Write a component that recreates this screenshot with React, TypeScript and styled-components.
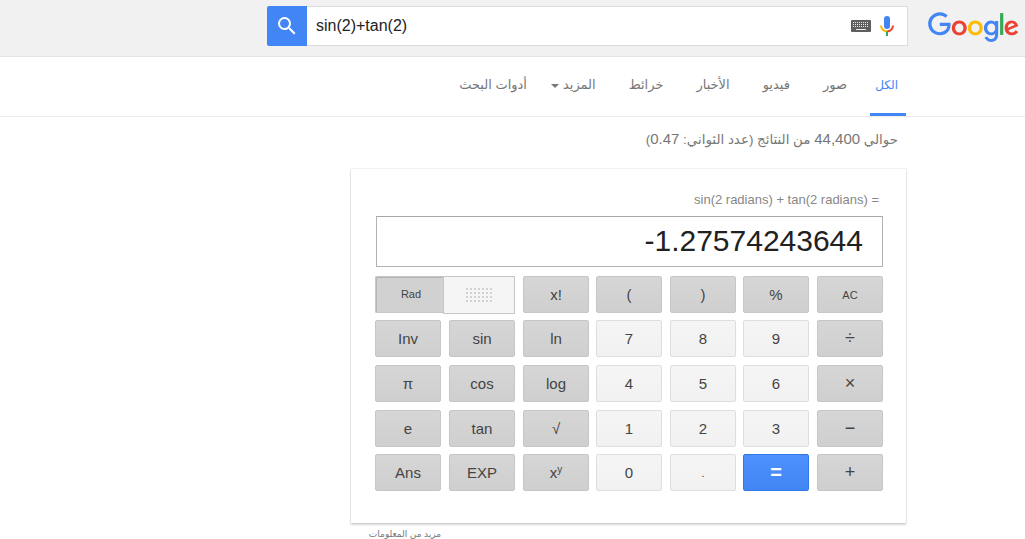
import styled, { createGlobalStyle } from 'styled-components'

const GlobalStyle = createGlobalStyle`
  html, body {
    margin: 0;
    height: 100%;
    overflow: hidden;
    background: #fff;
  }
  body {
    font-family: "Liberation Sans", "DejaVu Sans", sans-serif;
  }
`

type Tone = 'dark' | 'light' | 'blue'
type Size = 'small' | 'op' | 'equals'

const tabs = ['الكل', 'صور', 'فيديو', 'الأخبار', 'خرائط', 'المزيد', 'أدوات البحث']

const keys: { label: React.ReactNode; tone: Tone; size?: Size }[] = [
  { label: 'x!', tone: 'dark' },
  { label: '(', tone: 'dark' },
  { label: ')', tone: 'dark' },
  { label: '%', tone: 'dark' },
  { label: 'AC', tone: 'dark', size: 'small' },
  { label: 'Inv', tone: 'dark' },
  { label: 'sin', tone: 'dark' },
  { label: 'ln', tone: 'dark' },
  { label: '7', tone: 'light' },
  { label: '8', tone: 'light' },
  { label: '9', tone: 'light' },
  { label: '÷', tone: 'dark', size: 'op' },
  { label: 'π', tone: 'dark' },
  { label: 'cos', tone: 'dark' },
  { label: 'log', tone: 'dark' },
  { label: '4', tone: 'light' },
  { label: '5', tone: 'light' },
  { label: '6', tone: 'light' },
  { label: '×', tone: 'dark', size: 'op' },
  { label: 'e', tone: 'dark' },
  { label: 'tan', tone: 'dark' },
  { label: '√', tone: 'dark' },
  { label: '1', tone: 'light' },
  { label: '2', tone: 'light' },
  { label: '3', tone: 'light' },
  { label: '−', tone: 'dark', size: 'op' },
  { label: 'Ans', tone: 'dark' },
  { label: 'EXP', tone: 'dark' },
  { label: <span>x<sup>y</sup></span>, tone: 'dark' },
  { label: '0', tone: 'light' },
  { label: '.', tone: 'light', size: 'small' },
  { label: '=', tone: 'blue', size: 'equals' },
  { label: '+', tone: 'dark', size: 'op' },
]

const SearchIcon = () => (
  <svg width="24" height="24" viewBox="0 0 24 24" fill="#fff">
    <path d="M15.5 14h-.79l-.28-.27A6.471 6.471 0 0 0 16 9.5 6.5 6.5 0 1 0 9.5 16c1.61 0 3.09-.59 4.23-1.57l.27.28v.79l5 4.99L20.49 19l-4.99-5zm-6 0C7.01 14 5 11.99 5 9.5S7.01 5 9.5 5 14 7.01 14 9.5 11.99 14 9.5 14z" />
  </svg>
)

const KeyboardIcon = () => (
  <svg width="20" height="12" viewBox="0 0 20 12">
    <rect width="20" height="12" rx="1" fill="#5f5f5f" />
    <path d="M2 2.5h16M2 4.5h16M2 6.5h16" stroke="#e8e8e8" strokeWidth="1" strokeDasharray="1 1" />
    <path d="M5 9.5h10" stroke="#e8e8e8" strokeWidth="1" />
  </svg>
)

const MicIcon = () => (
  <svg width="14" height="20" viewBox="0 0 14 20">
    <path d="M7 0a3 3 0 0 1 3 3v7a3 3 0 0 1-6 0V3a3 3 0 0 1 3-3z" fill="#4285f4" />
    <path d="M1 9.5a6 6 0 0 0 6 6" fill="none" stroke="#fbbc05" strokeWidth="2" />
    <path d="M13 9.5a6 6 0 0 1-6 6" fill="none" stroke="#ea4335" strokeWidth="2" />
    <path d="M7 15.5V20" stroke="#34a853" strokeWidth="2" />
  </svg>
)

const GoogleLogo = () => (
  <svg width="91" height="31" viewBox="0 0 272 92">
    <path fill="#EA4335" d="M115.75 47.18c0 12.77-9.99 22.18-22.25 22.18s-22.25-9.41-22.25-22.18C71.25 34.32 81.24 25 93.5 25s22.25 9.32 22.25 22.18zm-9.74 0c0-7.98-5.79-13.44-12.51-13.44S80.99 39.2 80.99 47.18c0 7.9 5.79 13.44 12.51 13.44s12.51-5.55 12.51-13.44z" />
    <path fill="#FBBC05" d="M163.75 47.18c0 12.77-9.99 22.18-22.25 22.18s-22.25-9.41-22.25-22.18c0-12.85 9.99-22.18 22.25-22.18s22.25 9.32 22.25 22.18zm-9.74 0c0-7.98-5.79-13.44-12.51-13.44s-12.51 5.46-12.51 13.44c0 7.9 5.79 13.44 12.51 13.44s12.51-5.55 12.51-13.44z" />
    <path fill="#4285F4" d="M209.75 26.34v39.82c0 16.38-9.66 23.07-21.08 23.07-10.75 0-17.22-7.19-19.66-13.07l8.48-3.53c1.51 3.61 5.21 7.87 11.17 7.87 7.31 0 11.84-4.51 11.84-13v-3.19h-.34c-2.18 2.69-6.38 5.04-11.68 5.04-11.09 0-21.25-9.66-21.25-22.09 0-12.52 10.16-22.26 21.25-22.26 5.29 0 9.49 2.35 11.68 4.96h.34v-3.61h9.25zm-8.56 20.92c0-7.81-5.21-13.52-11.84-13.52-6.72 0-12.35 5.71-12.35 13.52 0 7.73 5.63 13.36 12.35 13.36 6.63 0 11.84-5.63 11.84-13.36z" />
    <path fill="#34A853" d="M225 3v65h-9.5V3h9.5z" />
    <path fill="#EA4335" d="M262.02 54.48l7.56 5.04c-2.44 3.61-8.32 9.83-18.48 9.83-12.6 0-22.01-9.74-22.01-22.18 0-13.19 9.49-22.18 20.92-22.18 11.51 0 17.14 9.16 18.98 14.11l1.01 2.52-29.65 12.28c2.27 4.45 5.8 6.72 10.75 6.72 4.96 0 8.4-2.44 10.92-6.14zm-23.27-7.98l19.82-8.23c-1.09-2.77-4.37-4.7-8.23-4.7-4.95 0-11.84 4.37-11.59 12.93z" />
    <path fill="#4285F4" d="M35.29 41.41V32H67c.31 1.64.47 3.58.47 5.68 0 7.06-1.93 15.79-8.15 22.01-6.05 6.3-13.78 9.66-24.02 9.66C16.32 69.35.36 53.89.36 34.91.36 15.93 16.32.47 35.3.47c10.5 0 17.98 4.12 23.6 9.49l-6.64 6.64c-4.03-3.78-9.49-6.72-16.97-6.72-13.86 0-24.7 11.17-24.7 25.03 0 13.86 10.84 25.03 24.7 25.03 8.99 0 14.11-3.61 17.39-6.89 2.66-2.66 4.41-6.46 5.1-11.65l-22.49.01z" />
  </svg>
)

export default function App() {
  return (
    <Page dir="rtl">
      <GlobalStyle />
      <Header>
        <LogoSlot>
          <GoogleLogo />
        </LogoSlot>
        <SearchBox>
          <SearchInput dir="ltr">
            <QueryText>sin(2)+tan(2)</QueryText>
            <KeyboardIcon />
            <MicIcon />
          </SearchInput>
          <SearchButton>
            <SearchIcon />
          </SearchButton>
        </SearchBox>
      </Header>
      <TabBar>
        {tabs.map((tab, i) => (
          <Tab key={tab} $active={i === 0}>
            {tab}
            {tab === 'المزيد' && <Caret />}
          </Tab>
        ))}
      </TabBar>
      <Main>
        <ResultStats>
          حوالي <Numeral>44,400</Numeral> من النتائج (عدد الثواني: <Numeral>0.47</Numeral>)
        </ResultStats>
        <Card dir="ltr">
          <Expression>sin(2 radians) + tan(2 radians) =</Expression>
          <Display>-1.27574243644</Display>
          <Keypad>
            <RadToggle>
              <RadLabel>Rad</RadLabel>
              <DegSide>
                <Dots />
              </DegSide>
            </RadToggle>
            {keys.map((k, i) => (
              <Key key={i} $tone={k.tone} $size={k.size}>
                {k.label}
              </Key>
            ))}
          </Keypad>
        </Card>
        <MoreInfo>مزيد من المعلومات</MoreInfo>
      </Main>
    </Page>
  )
}

const Page = styled.div`
  width: 1025px;
  height: 539px;
  overflow: hidden;
`

const Header = styled.header`
  height: 56px;
  background: #f1f1f1;
  border-bottom: 1px solid #e4e4e4;
  display: flex;
  align-items: flex-start;
  padding-right: 6px;
`

const LogoSlot = styled.div`
  width: 91px;
  height: 31px;
  margin-top: 12px;
  margin-left: 20px;
`

const SearchBox = styled.div`
  display: flex;
  margin-top: 6px;
  height: 40px;
`

const SearchInput = styled.div`
  width: 601px;
  box-sizing: border-box;
  background: #fff;
  border: 1px solid #dcdcdc;
  border-left: none;
  display: flex;
  align-items: center;
  padding: 0 13px 0 9px;
  gap: 9px;
`

const QueryText = styled.span`
  flex: 1;
  font-size: 16px;
  color: #222;
`

const SearchButton = styled.div`
  width: 40px;
  height: 40px;
  background: #4285f4;
  border-radius: 2px 0 0 2px;
  display: flex;
  align-items: center;
  justify-content: center;
`

const TabBar = styled.nav`
  height: 59px;
  border-bottom: 1px solid #ebebeb;
  display: flex;
  padding-right: 119px;
  gap: 17px;
`

const Tab = styled.div<{ $active?: boolean }>`
  height: 59px;
  box-sizing: border-box;
  padding: 20px 8px 0;
  ${p => p.$active && 'width: 36px; padding-left: 0; margin-left: -2px;'}
  font-size: ${p => (p.$active ? '12px' : '13px')};
  line-height: 16px;
  display: flex;
  align-items: flex-start;
  white-space: nowrap;
  color: ${p => (p.$active ? '#4285f4' : '#777')};
  border-bottom: 3px solid ${p => (p.$active ? '#4285f4' : 'transparent')};
`

const Caret = styled.span`
  margin: 7px 4px 0 -9px;
  border-top: 4px solid #777;
  border-left: 4px solid transparent;
  border-right: 4px solid transparent;
`

const Main = styled.main`
  width: 555px;
  margin-right: 119px;
`

const ResultStats = styled.div`
  padding: 13px 8px 0 0;
  height: 39px;
  box-sizing: border-box;
  font-size: 13.4px;
  line-height: 17px;
  color: #777;
`

const Numeral = styled.span`
  font-size: 15px;
`

const Card = styled.section`
  margin-top: 13px;
  width: 555px;
  height: 354px;
  box-sizing: border-box;
  background: #fff;
  box-shadow: 0 2px 2px rgba(0, 0, 0, 0.16), 0 0 0 1px rgba(0, 0, 0, 0.05);
  padding: 23px 23px 0 24px;
`

const Expression = styled.div`
  text-align: right;
  padding-right: 4px;
  font-size: 13px;
  line-height: 16px;
  color: #878787;
  height: 24px;
`

const Display = styled.div`
  margin-left: 1px;
  height: 51px;
  box-sizing: border-box;
  border: 1px solid #b2b2b2;
  border-top-color: #a8a8a8;
  padding-right: 19px;
  text-align: right;
  font-size: 30px;
  line-height: 47px;
  color: #212121;
`

const Keypad = styled.div`
  margin-top: 9px;
  display: grid;
  grid-template-columns: 74px 74px 73px 74px 73px 74px 66px;
  grid-template-rows: 44px 45px 45px 44px 37px;
  align-items: start;
`

const RadToggle = styled.div`
  grid-column: span 2;
  width: 140px;
  height: 38px;
  display: flex;
`

const RadLabel = styled.div`
  width: 68px;
  height: 37px;
  box-sizing: border-box;
  background: #d1d1d1;
  border: 1px solid #c6c6c6;
  border-width: 1px 0 1px 1px;
  box-shadow: inset 1px 1px 0 #b5b5b5;
  border-radius: 2px 0 0 2px;
  padding-left: 3px;
  font-size: 11px;
  line-height: 35px;
  text-align: center;
  color: #444;
`

const DegSide = styled.div`
  flex: 1;
  box-sizing: border-box;
  background: #f5f5f5;
  border: 1px solid #c6c6c6;
  display: flex;
  align-items: center;
  justify-content: center;
`

const Dots = styled.span`
  width: 26px;
  height: 14px;
  background-image: linear-gradient(to bottom, transparent 2px, #f5f5f5 2px),
    linear-gradient(to right, #d2d2d2 2px, transparent 2px);
  background-size: 4px 4px;
`

const toneStyles: Record<Tone, string> = {
  dark: 'background: linear-gradient(#d6d6d6, #cfcfcf); border-color: #c6c6c6; color: #444;',
  light: 'background: linear-gradient(#f5f5f5, #f1f1f1); border-color: #dedede; color: #444;',
  blue: 'background: linear-gradient(#4d90fe, #4285f4); border-color: #3079ed; color: #fff;',
}

const keyFonts: Record<Size, string> = {
  small: 'font-size: 11px;',
  op: 'font-size: 18px;',
  equals: 'font-size: 20px; font-weight: 700;',
}

const Key = styled.div<{ $tone: Tone; $size?: Size }>`
  width: 66px;
  height: 37px;
  box-sizing: border-box;
  border: 1px solid;
  border-radius: 2px;
  display: flex;
  align-items: center;
  justify-content: center;
  font-size: 15px;
  ${p => p.$size && keyFonts[p.$size]}
  ${p => toneStyles[p.$tone]}

  sup {
    font-size: 10px;
    line-height: 0;
    vertical-align: 5px;
  }
`

const MoreInfo = styled.div`
  margin-top: 4px;
  padding-right: 465px;
  font-size: 9px;
  line-height: 14px;
  color: #777;
  white-space: nowrap;
`
